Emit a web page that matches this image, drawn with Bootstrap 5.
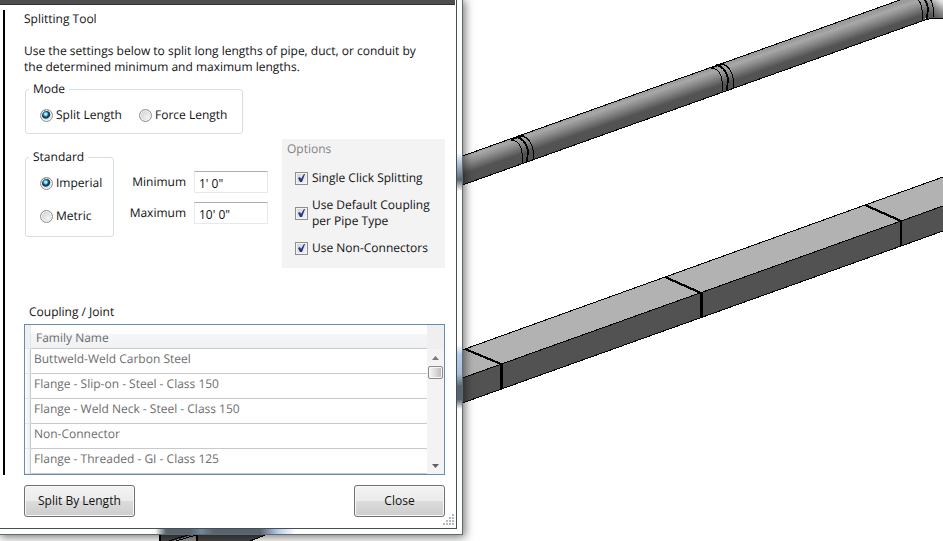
<!DOCTYPE html>
<html lang="en">
<head>
<meta charset="utf-8">
<meta name="viewport" content="width=device-width, initial-scale=1">
<title>Splitting Tool</title>
<link rel="stylesheet" href="https://cdn.jsdelivr.net/npm/bootstrap@5.3.0/dist/css/bootstrap.min.css">
<style>
  body { font: 12px/16px "Open Sans", "Noto Sans", sans-serif; text-rendering: geometricPrecision; color: #111; background: #fff; }
  .model-view { z-index: 0; min-width: 943px; height: 541px; }
  .tool-window {
    z-index: 1; width: 49.1%; min-width: 463px;
    padding: 0 5px 5px 0;
    border: solid #66696b; border-width: 0 1px 1px 0;
    background-color: #fcfdfd;
    background-image:
      linear-gradient(#fcfdfd, #b4c8de 25%, #5a6770 70%, #fcfdfd),
      linear-gradient(#fcfdfd, #b4cdea 15%, #a9c0dc 45%, #56646f 65%, #56646f 85%, #fcfdfd),
      linear-gradient(90deg, #fcfdfd, #56646f 8%, #56646f 25%, #71879b 33%, #56646f 42%, #56646f 75%, #b4cdea 88%, #fcfdfd);
    background-repeat: no-repeat;
    background-size: 5px 38px, 5px 64px, 140px 5px;
    background-position: right 153px, right 345px, 155px bottom;
    box-shadow: 1px 1px 9px 1px rgba(0,0,0,.55);
  }
  .window-face { background: #fff; border: solid #4a4d4f; border-width: 0 1px 1px 0; padding-bottom: 11px; }
  .title-strip { height: 5px; margin-right: 1px; background: #4e4e4c; border-bottom: 1px solid #333; }
  .tool-body { margin: 5px 11px 0 3px; border-left: 2px solid #000; padding: 1px 0 0 19px; }
  .intro { margin-top: 16px; margin-bottom: 6px; max-width: 400px; }
  .group-box { border: 1px solid #d5dfe8; border-radius: 3px; margin-left: 1px; padding: 10px 14px 10px; }
  .group-box legend { font-size: 12px; line-height: 16px; padding: 0 4px; margin-left: -11px; }
  .mode-box { width: 218px; }
  .mode-box .choice { min-width: 99px; }
  .settings-row { padding-top: 5px; }
  .standard-box { width: 89px; margin-top: 10px; padding-bottom: 12px; }
  .standard-box .choices { gap: 17px; }
  .choice { gap: 3px; white-space: nowrap; }
  .radio-dot {
    appearance: none; flex: none; width: 13px; height: 13px; margin: 0; border-radius: 50%;
    border: 1px solid #8e8f8f; box-shadow: inset 0 0 0 1px #f4f4f4;
    background: radial-gradient(circle at 65% 65%, #f3f3f3, #c4c8cc);
  }
  .radio-dot:checked {
    background: radial-gradient(circle at 43% 38%, #b5eaf8 0 1px, #3ba0c8 2px, #12405c 3px, #12405c 4px, #dde1e4 5px);
  }
  .length-grid { display: grid; grid-template-columns: 56px 74px; column-gap: 8px; row-gap: 9px; margin: 32px 0 0 16px; align-content: start; align-items: center; justify-items: end; }
  .length-box { width: 100%; height: 22px; padding: 2px 4px 0; border: 1px solid #e3e9ef; border-top-color: #abadb3; border-radius: 1px; color: #111; }
  .options-panel { width: 163px; background: #f3f3f3; padding: 2px 5px 12px; }
  .options-panel h2 { font-size: 12px; line-height: 16px; font-weight: 400; color: #838383; margin: 0 0 13px; }
  .option-list { gap: 11px; padding-left: 8px; }
  .option-list .choice { gap: 4px; }
  .tick-box {
    appearance: none; flex: none; width: 13px; height: 13px; margin: 0; border: 1px solid #8e8f8f;
    background: linear-gradient(135deg, #cdd2d8, #f6f6f6); box-shadow: inset 0 0 0 1px #f4f4f4;
  }
  .tick-wrap { width: 13px; height: 13px; }
  .tick-wrap svg { pointer-events: none; opacity: 0; }
  .tick-box:checked + svg { opacity: 1; }
  .joint-title { font-size: 12px; line-height: 16px; font-weight: 400; margin: 36px 0 4px 5px; }
  .joint-list { border: 1px solid #688caf; }
  .joint-table { border-collapse: separate; border-spacing: 0; color: #6d6d6d; }
  .joint-table th, .joint-table td { height: 25px; padding: 0 3px 4px; border-bottom: 1px solid #c9c9c9; font-weight: 400; }
  .joint-table thead th { height: 24px; padding: 3px 5px 0; background: linear-gradient(#fff 40%, #f3f5f7 41%, #f0f2f4); }
  .joint-table thead td { height: 24px; }
  .joint-table .row-grip { width: 6px; padding: 0; border-right: 1px solid #c9c9c9; border-bottom-color: #e4e7ea; background: linear-gradient(90deg, #fff, #eceef0); }
  .joint-table thead .row-grip { border-right-color: #e4e7ea; background: #f0f0f0; }
  .scroll-rail { width: 17px; background: #f3f3f3; border-top: 24px solid #efefef; }
  .rail-arrow { width: 17px; height: 17px; border: 0; background: none; padding: 0; line-height: 0; }
  .rail-thumb { width: 15px; height: 13px; padding: 0; margin: 0 1px; border: 1px solid #8b8b8b; border-radius: 2px; background: linear-gradient(90deg, #f8f8f8, #dedede 45%, #b9b9b9); box-shadow: inset 0 0 0 1px #f6f6f6; }
  .action-row { margin: 10px 11px 0 24px; }
  .push-button {
    height: 32px; min-width: 91px; padding: 0 13px; border: 1px solid #707070; border-radius: 3px; color: #111;
    background: linear-gradient(#f3f3f3, #ebebeb 50%, #dcdcdc 51%, #cdcdcd); box-shadow: inset 0 0 0 1px #f8f8f8;
  }
  .size-grip { right: 2px; bottom: 3px; }
</style>
<script src="https://cdn.jsdelivr.net/npm/bootstrap@5.3.0/dist/js/bootstrap.bundle.min.js"></script>
</head>
<body class="position-relative overflow-hidden min-vh-100">

<svg class="model-view position-absolute top-0 start-0" viewBox="0 0 943 541" preserveAspectRatio="xMinYMin meet" shape-rendering="crispEdges" aria-hidden="true">
  <defs>
    <linearGradient id="pipeShade" gradientUnits="userSpaceOnUse" x1="620" y1="100" x2="629" y2="126">
      <stop offset="0" stop-color="#9a9a9a"/><stop offset=".14" stop-color="#a8a8a8"/>
      <stop offset=".35" stop-color="#8a8a8a"/><stop offset=".68" stop-color="#535353"/><stop offset="1" stop-color="#525252"/>
    </linearGradient>
    <linearGradient id="elbowShade" gradientUnits="userSpaceOnUse" x1="944" y1="3" x2="934" y2="17">
      <stop offset="0" stop-color="#e2e2e2"/><stop offset=".5" stop-color="#8c8c8c"/><stop offset="1" stop-color="#575757"/>
    </linearGradient>
    <g id="coupling" fill="none" stroke="#000">
      <path d="M511 140l13-5" stroke-width="1.5"/>
      <path d="M512 140q9 1 10 13v10"/>
      <path d="M516 137q9 1 12 14l-1 11" stroke-width="1.8"/>
      <path d="M522 136q9 2 11 14l1 5-1 5"/>
    </g>
  </defs>
  <path fill="url(#pipeShade)" d="M440 164L900 0h30l-5 20L440 193z"/>
  <path fill="url(#elbowShade)" d="M926 0h18v18h-12l-7 2q5-10 1-20z"/>
  <g fill="none" stroke="#000" stroke-width="1">
    <path d="M440 164L900 0"/><path d="M440 193L925 20l8-2h10"/>
  </g>
  <use href="#coupling"/><use href="#coupling" x="200" y="-72"/><use href="#coupling" x="400" y="-143"/>

  <path fill="#b2b2b2" d="M440 358L943 177v29L440 386z"/>
  <path fill="#525252" d="M440 386L943 206v25L440 411z"/>
  <g fill="none" stroke="#000" stroke-width="1">
    <path d="M440 358L943 177"/><path d="M440 386L943 206"/><path d="M440 411L943 231"/>
    <path stroke-width="2.2" d="M465 349l36 15M665 277l36 16M865 205l36 16"/>
    <path stroke-width="3" d="M501.500 363v26M701.500 292v26"/>
    <path stroke-width="2" d="M901 220v26"/>
  </g>

  <path fill="#484848" d="M159 530h119l-28 11h-91z"/>
  <path fill="#999" d="M172 541l24-7v7z"/>
  <path fill="none" stroke="#000" stroke-width="2" d="M160 530v11M197 530v11"/>
  <path fill="none" stroke="#000" stroke-width="1" d="M169 541l22-7M176 541l20-6M278 530l-28 11"/>
</svg>

<main class="tool-window position-relative">
  <div class="window-face position-relative">
    <div class="title-strip"></div>
    <form>
      <div class="tool-body">
        <div>Splitting Tool</div>
        <p class="intro">Use the settings below to split long lengths of pipe, duct, or conduit by<br>the determined minimum and maximum lengths.</p>

        <fieldset class="group-box mode-box">
          <legend class="float-none w-auto mb-0">Mode</legend>
          <div class="d-flex">
            <label class="choice d-flex align-items-center"><input class="radio-dot" type="radio" name="mode" checked>Split Length</label>
            <label class="choice d-flex align-items-center"><input class="radio-dot" type="radio" name="mode">Force Length</label>
          </div>
        </fieldset>

        <div class="settings-row d-flex">
          <div class="d-flex flex-grow-1 align-items-start">
            <fieldset class="group-box standard-box">
              <legend class="float-none w-auto mb-0">Standard</legend>
              <div class="choices d-flex flex-column">
                <label class="choice d-flex align-items-center"><input class="radio-dot" type="radio" name="units" checked>Imperial</label>
                <label class="choice d-flex align-items-center"><input class="radio-dot" type="radio" name="units">Metric</label>
              </div>
            </fieldset>
            <div class="length-grid">
              <label for="minLength">Minimum</label><input class="length-box" id="minLength" type="text" value="1' 0&quot;">
              <label for="maxLength">Maximum</label><input class="length-box" id="maxLength" type="text" value="10' 0&quot;">
            </div>
          </div>
          <section class="options-panel">
            <h2>Options</h2>
            <div class="option-list d-flex flex-column">
              <label class="choice d-flex align-items-center"><span class="tick-wrap position-relative d-flex"><input class="tick-box" type="checkbox" checked><svg class="position-absolute top-0 start-0" width="13" height="13" viewBox="0 0 13 13"><path d="M3 6l2-1 1 2 3-5h1L7 10H5z" fill="#27357f"/></svg></span>Single Click Splitting</label>
              <label class="choice d-flex align-items-center"><span class="tick-wrap position-relative d-flex"><input class="tick-box" type="checkbox" checked><svg class="position-absolute top-0 start-0" width="13" height="13" viewBox="0 0 13 13"><path d="M3 6l2-1 1 2 3-5h1L7 10H5z" fill="#27357f"/></svg></span><span>Use Default Coupling<br>per Pipe Type</span></label>
              <label class="choice d-flex align-items-center"><span class="tick-wrap position-relative d-flex"><input class="tick-box" type="checkbox" checked><svg class="position-absolute top-0 start-0" width="13" height="13" viewBox="0 0 13 13"><path d="M3 6l2-1 1 2 3-5h1L7 10H5z" fill="#27357f"/></svg></span>Use Non-Connectors</label>
            </div>
          </section>
        </div>

        <h2 class="joint-title" id="jointTitle">Coupling / Joint</h2>
        <div class="joint-list d-flex">
          <table class="joint-table flex-grow-1" aria-labelledby="jointTitle">
            <thead><tr><td class="row-grip"></td><th scope="col">Family Name</th></tr></thead>
            <tbody>
              <tr><td class="row-grip"></td><td>Buttweld-Weld Carbon Steel</td></tr>
              <tr><td class="row-grip"></td><td>Flange - Slip-on - Steel - Class 150</td></tr>
              <tr><td class="row-grip"></td><td>Flange - Weld Neck - Steel - Class 150</td></tr>
              <tr><td class="row-grip"></td><td>Non-Connector</td></tr>
              <tr><td class="row-grip"></td><td>Flange - Threaded - GI - Class 125</td></tr>
            </tbody>
          </table>
          <div class="scroll-rail d-flex flex-column">
            <button class="rail-arrow" type="button" aria-label="Scroll up"><svg width="7" height="4" viewBox="0 0 7 4"><path d="M0 4l3.500-4L7 4z" fill="#777"/></svg></button>
            <button class="rail-thumb" type="button" aria-label="Scroll position"></button>
            <button class="rail-arrow mt-auto" type="button" aria-label="Scroll down"><svg width="7" height="4" viewBox="0 0 7 4"><path d="M0 0h7L3.500 4z" fill="#606060"/></svg></button>
          </div>
        </div>
      </div>
      <div class="action-row d-flex justify-content-between">
        <button class="push-button" type="submit">Split By Length</button>
        <button class="push-button" type="button">Close</button>
      </div>
    </form>
    <svg class="size-grip position-absolute" width="11" height="11" viewBox="0 0 11 11" aria-hidden="true"><path fill="#b4bac8" d="M9 0h2v2H9zM6 3h2v2H6zM9 3h2v2H9zM3 6h2v2H3zM6 6h2v2H6zM9 6h2v2H9zM0 9h2v2H0zM3 9h2v2H3zM6 9h2v2H6zM9 9h2v2H9z"/></svg>
  </div>
</main>
</body>
</html>
